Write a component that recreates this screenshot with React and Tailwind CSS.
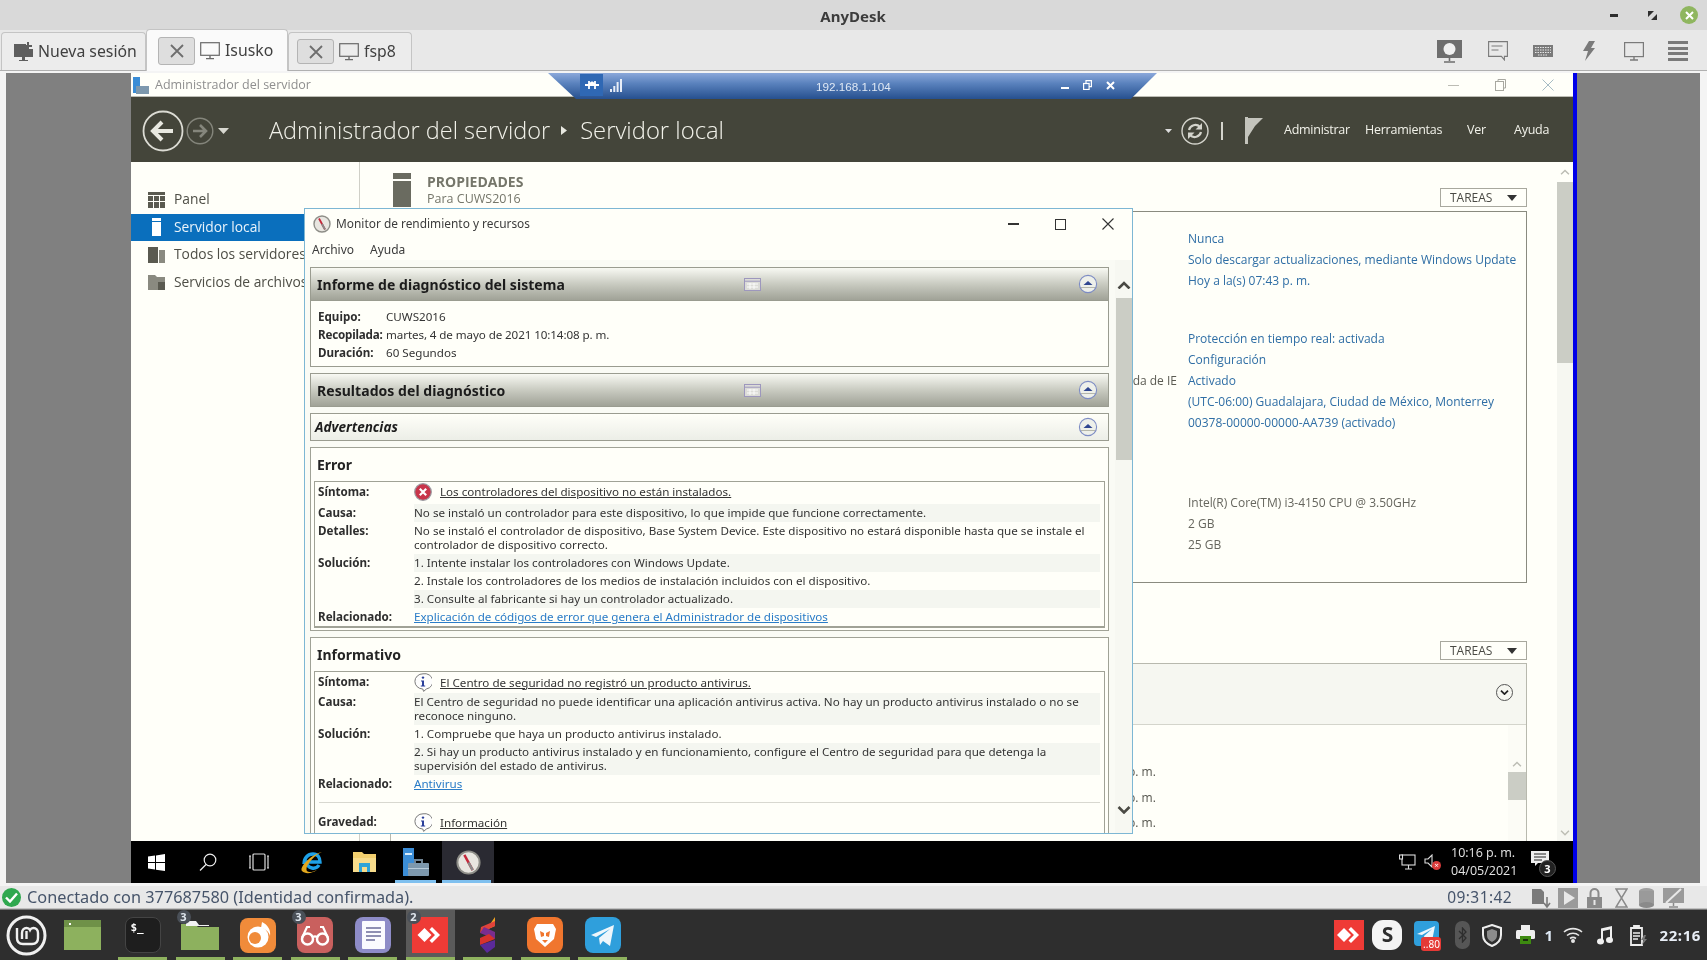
import React from "react";

const Monitor = ({ c = "#6a6a6a", w = 20, h = 18, fill = false }) => (
  <svg width={w} height={h} viewBox="0 0 20 18" fill="none">
    <rect x="0.7" y="0.7" width="18.6" height="12.6" fill={fill ? c : "none"} stroke={c} strokeWidth="1.2" />
    <path d="M10 13.5v2.5M6 16.6h8" stroke={c} strokeWidth="1.4" />
  </svg>
);
const TabX = ({ cls }) => (
  <div className={"flex items-center justify-center border border-[#b4b4b4] rounded-[3px] bg-[#dedede] " + cls}>
    <svg width="16" height="16" viewBox="0 0 16 16"><path d="M2 2l12 12M14 2L2 14" stroke="#6e6e6e" strokeWidth="1.8" /></svg>
  </div>
);
const Tareas = () => (
  <div className="w-[87px] h-[19px] border border-[#a8a89e] bg-[#fffff9] flex items-center justify-between pl-[9px] pr-[9px] text-[12px] text-[#4a4a44]">
    <span>TAREAS</span>
    <svg width="10" height="6" viewBox="0 0 10 6"><path d="M0 0h10L5 6z" fill="#333" /></svg>
  </div>
);
const Collapse = () => (
  <svg width="20" height="20" viewBox="0 0 20 20" className="shrink-0">
    <circle cx="10" cy="10" r="8.6" fill="#eef0ea" stroke="#7d8cc4" strokeWidth="1.1" />
    <path d="M10 7l4.5 4h-9z" fill="#2f4690" />
    <path d="M3 13.5h14" stroke="#b5b7ac" strokeWidth="1" />
  </svg>
);
const TableIco = () => (
  <svg width="17" height="13" viewBox="0 0 17 13">
    <rect x="0.5" y="0.5" width="16" height="12" fill="#dcdcd8" stroke="#9d97bd" />
    <path d="M1 3.2h15" stroke="#9d97bd" />
    <path d="M3 6h11M3 9h11M6 5v6M10 5v6" stroke="#fff" strokeWidth="0.9" />
  </svg>
);
const ErrIco = () => (
  <svg width="18" height="18" viewBox="0 0 18 18" className="shrink-0">
    <circle cx="9" cy="9" r="8.3" fill="#c8354a" stroke="#9a9aa0" strokeWidth="1.2" />
    <path d="M5.8 5.8l6.4 6.4M12.2 5.8l-6.4 6.4" stroke="#fff" strokeWidth="2.2" />
  </svg>
);
const InfoIco = () => (
  <svg width="18" height="19" viewBox="0 0 18 19" className="shrink-0">
    <path d="M9 .8a8 7.6 0 0 1 3.4 15.2L9.6 18.4 8.8 16A8 7.6 0 0 1 9 .8z" fill="#fdfdfd" stroke="#7a7a7a" strokeWidth="1" />
    <circle cx="9" cy="4.6" r="1.2" fill="#2a3f9a" />
    <path d="M7 7.4h3v5.2h1.2v1H6.8v-1H8V8.4H7z" fill="#2a3f9a" />
  </svg>
);
const Compass = ({ s = 18 }) => (
  <svg width={s} height={s} viewBox="0 0 18 18" className="shrink-0">
    <circle cx="9" cy="9" r="8" fill="#e8e6e0" stroke="#8e8e88" strokeWidth="1.4" />
    <path d="M6 3.5l6 11" stroke="#c4283a" strokeWidth="1.8" />
    <path d="M12 14.5L9 9" stroke="#8a8a8a" strokeWidth="1.8" />
  </svg>
);
const Row = ({ label, children, h = "py-[2px]", alt, lab = "text-[#2e2e2e]" }) => (
  <div className="flex">
    <div className={"w-[99px] shrink-0 pl-[3px] font-bold leading-[14px] " + h + " " + lab}>{label}</div>
    <div className={"flex-1 mr-[4px] leading-[14px] " + h + (alt ? " bg-[#f4f6f0]" : "")}>{children}</div>
  </div>
);
const Chev = ({ up = true, c = "#4a4a44", w = 14, sw = 2.6 }) => (
  <svg width={w} height={w * 0.6} viewBox="0 0 14 8.4"><path d={up ? "M1.5 7.5L7 2l5.5 5.5" : "M1.5 1L7 6.5 12.5 1"} fill="none" stroke={c} strokeWidth={sw} /></svg>
);

const Section = ({ title, mt = "" }) => (
  <div className={"h-[34px] border border-[#9a9c90] bg-gradient-to-b from-[#f8f9f3] via-[#c9cbc1] to-[#a0a297] flex items-center pl-[6px] " + mt}>
    <span className="font-bold text-[14px] text-[#1c1c1c] w-[420px] shrink-0 tracking-[0.05px]">{title}</span>
    <div className="ml-[7px]"><TableIco /></div>
    <div className="ml-auto mr-[10px]"><Collapse /></div>
  </div>
);

const Val = ({ children, cls = "text-[#2f6ea5]" }) => <div className={"h-[21px] leading-[21px] pl-[797px] whitespace-nowrap " + cls}>{children}</div>;

const SideText = ({ children }) => <span className="ml-[9px] w-[130px] overflow-hidden whitespace-nowrap block">{children}</span>;

function Dock() {
  const Item = ({ children, badge, active }) => (
    <div className={"relative w-[49px] h-full flex items-center justify-center " + (active ? "bg-[#5a5a5a]" : "")}>
      {children}
      {badge && <div className="absolute left-[1px] top-[0px] w-[14px] h-[14px] rounded-full bg-[#4a5058] text-[#dfe6ee] text-[11px] font-bold leading-[14px] text-center">{badge}</div>}
      <div className="absolute left-0 right-0 bottom-0 h-[3px] bg-[#8fb35f]" />
    </div>
  );
  return (
    <div className="h-[51px] bg-[#2e2e2e] flex items-center shrink-0 border-t border-[#777]">
      <div className="ml-[6px] w-[41px] flex justify-center">
        <svg width="41" height="41" viewBox="0 0 41 41" fill="none">
          <circle cx="20.5" cy="20.5" r="18.5" stroke="#f0f0f0" strokeWidth="3" />
          <path d="M11 13v10c0 4 2.500 6 6 6h9c4 0 6-2.500 6-6v-5c0-3-2-5-4.500-5-2 0-3 1-3.500 2-.5-1-1.700-2-3.500-2-2.500 0-4.500 2-4.500 5v6" stroke="#f0f0f0" strokeWidth="2.400" />
          <path d="M20.500 16v8" stroke="#f0f0f0" strokeWidth="2.400" />
        </svg>
      </div>
      <div className="ml-[17px] w-[37px] h-[30px] bg-[#8db15e] border-t-[7px] border-[#6f9148] relative">
        <div className="absolute left-[5px] top-[-4px] w-[2px] h-[2px] bg-white" />
      </div>
      <div className="ml-[17px] flex h-full gap-[8.5px]">
        <Item>
          <div className="w-[36px] h-[36px] rounded-[8px] bg-[#1e1e1e] border border-[#444] text-white text-[11px] font-bold pl-[5px] pt-[3px] leading-[14px] font-['DejaVu_Sans_Mono',monospace]">$_</div>
        </Item>
        <Item badge="3">
          <svg width="38" height="30" viewBox="0 0 38 30"><path d="M0 4h14l3 3h21v23H0z" fill="#8db15e" /><path d="M5 1h10l3 4h10v1H5z" fill="#f2f2f2" /></svg>
        </Item>
        <Item>
          <svg width="36" height="35" viewBox="0 0 36 35">
            <rect width="36" height="35" rx="8" fill="#f08b3a" />
            <circle cx="18" cy="19" r="10.500" fill="#fff" />
            <circle cx="15" cy="20" r="6" fill="#f08b3a" />
            <path d="M22 4c6 3 9 8 8 14-1-4-4-7-9-8z" fill="#fff" />
          </svg>
        </Item>
        <Item badge="3">
          <svg width="36" height="36" viewBox="0 0 36 36" fill="none">
            <rect width="36" height="36" rx="8" fill="#c9605e" />
            <circle cx="10.500" cy="22" r="5.500" stroke="#fff" strokeWidth="2.500" />
            <circle cx="25.500" cy="22" r="5.500" stroke="#fff" strokeWidth="2.500" />
            <path d="M16 20c1.500-1 2.500-1 4 0M5 21L10 10h3M31 21l-5-11h-3" stroke="#fff" strokeWidth="2.200" />
          </svg>
        </Item>
        <Item>
          <svg width="36" height="36" viewBox="0 0 36 36">
            <rect width="36" height="36" rx="8" fill="#8e8cc8" />
            <rect x="7" y="4" width="23" height="28" rx="1" fill="#fbfbff" />
            <path d="M11 11h15M11 15h15M11 19h15M11 23h9" stroke="#6c6c9a" strokeWidth="1.500" />
          </svg>
        </Item>
        <Item active badge="2">
          <svg width="36" height="36" viewBox="0 0 36 36">
            <rect width="36" height="36" fill="#ef3b36" />
            <path d="M12.500 11l7 7-7 7-7-7z" fill="#fff" />
            <path d="M20 10l8 8-8 8-2.500-2.500 5.500-5.500-5.500-5.500z" fill="#fff" />
          </svg>
        </Item>
        <Item>
          <svg width="18" height="38" viewBox="0 0 18 38">
            <path d="M16 1v9L7 14z" fill="#f5a623" />
            <path d="M16 10L1 17l1-6 14-6z" fill="#e0433a" />
            <path d="M1 17l15 6v-7L5 11z" fill="#7a2d8f" />
            <path d="M16 23L1 29v-7l9-4z" fill="#d8322c" />
            <path d="M1 29l7 8 8-6v-7z" fill="#5a2a9a" />
          </svg>
        </Item>
        <Item>
          <svg width="36" height="36" viewBox="0 0 36 36">
            <rect width="36" height="36" rx="8" fill="#f0762e" />
            <path d="M10 7h16l3 5-2 10-9 8-9-8-2-10z" fill="#fff" />
            <path d="M13 14l4 2v3l-3 1zM23 14l-4 2v3l3 1zM15 23h6l-3 3z" fill="#f0762e" />
          </svg>
        </Item>
        <Item>
          <svg width="36" height="36" viewBox="0 0 36 36">
            <rect width="36" height="36" rx="8" fill="#2f9fdc" />
            <path d="M6 18L29 8l-4 21-7-5-3 4-1-7 11-9-14 8z" fill="#eef6fb" />
          </svg>
        </Item>
      </div>
      <div className="ml-auto flex items-center h-full">
        <svg width="30" height="30" viewBox="0 0 30 30">
          <rect width="30" height="30" fill="#ef3b36" />
          <path d="M10 8l7 7-7 7-7-7z" fill="#fff" />
          <path d="M17 7l8 8-8 8-2.500-2.500 5.500-5.500-5.500-5.500z" fill="#fff" />
        </svg>
        <div className="ml-[8px] w-[30px] h-[30px] rounded-[11px] bg-[#f4f4f4] flex items-center justify-center text-[#2e2e2e] font-bold text-[21px] font-['Open_Sans',sans-serif]">S</div>
        <div className="relative ml-[12px] w-[27px] h-[28px]">
          <svg width="25" height="25" viewBox="0 0 25 25"><rect width="25" height="25" rx="4" fill="#2f9fdc" /><path d="M3 13L21 5l-3 15-5-3-2 3-1-5 8-7-10 6z" fill="#eef6fb" /></svg>
          <div className="absolute right-0 bottom-[-2px] w-[20px] h-[14px] rounded-[3px] bg-[#e53935] text-white text-[10px] leading-[14px] text-center">..80</div>
        </div>
        <div className="ml-[14px] w-[15px] h-[28px] rounded-[7px] bg-[#565656] flex items-center justify-center">
          <svg width="9" height="16" viewBox="0 0 9 16"><path d="M1 4l7 7-3.500 4V1L8 5 1 12" fill="none" stroke="#2e2e2e" strokeWidth="1.300" /></svg>
        </div>
        <svg className="ml-[12px]" width="20" height="23" viewBox="0 0 20 23" fill="none">
          <path d="M10 1l9 3v7c0 6-4 9-9 11C5 20 1 17 1 11V4z" stroke="#eee" strokeWidth="2" />
          <path d="M10 5l5 2v4c0 4-2 5-5 7-3-2-5-3-5-7V7z" fill="#8c8c8c" />
        </svg>
        <svg className="ml-[14px]" width="19" height="20" viewBox="0 0 19 20">
          <rect x="5" y="0" width="9" height="5" fill="#eee" />
          <rect x="0" y="5" width="19" height="9" rx="1.500" fill="#eee" />
          <rect x="4" y="11" width="11" height="8" fill="#3d8a10" />
          <path d="M7 15h5" stroke="#111" strokeWidth="1.500" />
        </svg>
        <span className="ml-[9px] w-[8px] text-[#dfeaf6] font-bold text-[15px] font-['Noto_Sans',sans-serif]">1</span>
        <svg className="ml-[11px]" width="20" height="16" viewBox="0 0 20 16" fill="none" stroke="#e6e6e6" strokeWidth="1.600">
          <path d="M1 5c5-4.500 13-4.500 18 0M4 8.500c3.500-3 8.500-3 12 0M7 11.500c2-1.500 4-1.500 6 0" />
          <circle cx="10" cy="14" r="1.200" fill="#e6e6e6" />
        </svg>
        <svg className="ml-[14px]" width="16" height="19" viewBox="0 0 16 19" fill="#f0f0f0">
          <path d="M4 2.500L15 0v3L6 5v10H4zM13 3h2v11h-2z" />
          <ellipse cx="3.500" cy="15.500" rx="3.500" ry="3" />
          <ellipse cx="12.500" cy="14" rx="3.500" ry="3" />
        </svg>
        <svg className="ml-[17px]" width="18" height="21" viewBox="0 0 18 21" fill="none">
          <path d="M1 3h11v17H1zM4 3V1h5v2" stroke="#eee" strokeWidth="1.800" />
          <path d="M3 8h7M3 11h7M3 14h5" stroke="#eee" strokeWidth="1.500" />
          <path d="M14 10l-3 5h2.500L12 20l5-6h-2.500L16 10z" fill="#777" />
        </svg>
        <span className="ml-[11px] mr-[6px] text-[#e8eef6] font-bold text-[15px] tracking-[0.6px] font-['Noto_Sans',sans-serif]">22:16</span>
      </div>
    </div>
  );
}

function Taskbar() {
  const B = ({ w = "w-[52px]", children, cls = "" }) => <div className={"relative h-full flex items-center justify-center " + w + " " + cls}>{children}</div>;
  return (
    <div className="h-[42px] bg-black flex items-center shrink-0 text-white relative">
      <B w="w-[51px]">
        <svg width="17" height="17" viewBox="0 0 17 17" fill="#fff"><path d="M0 2.500l7-1v6.500H0zM8 1.400L17 0v8H8zM0 9h7v6.500l-7-1zM8 9h9v8l-9-1.300z" /></svg>
      </B>
      <B w="w-[51px]">
        <svg width="18" height="18" viewBox="0 0 18 18" fill="none" stroke="#eee" strokeWidth="1.200"><circle cx="11" cy="7" r="5.800" /><path d="M7 11.500L1 17.500" /></svg>
      </B>
      <B w="w-[51px]">
        <svg width="22" height="18" viewBox="0 0 22 18" fill="none" stroke="#ddd" strokeWidth="1.200"><rect x="5" y="1" width="12" height="16" rx="1" /><path d="M2 3v12M1 3h2M1 15h2M20 3v12M19 3h2M19 15h2" /></svg>
      </B>
      <B cls="ml-[2px]">
        <svg width="25" height="25" viewBox="0 0 25 25" fill="none">
          <path d="M4 14c0-6 4-10 9-10 5 0 7 4 7 8H7c0 7 9 8 12 3" stroke="#1ea1e8" strokeWidth="3.400" />
          <path d="M2 21c-3-3 8-16 20-19-8 3-18 15-15 19 2 2 6 1 10-1-6 4-12 4-15 1z" fill="#e3a81e" />
        </svg>
      </B>
      <B>
        <svg width="23" height="22" viewBox="0 0 23 22">
          <path d="M0 1h9l2 2h12v18H0z" fill="#f2cf6e" />
          <path d="M0 7h23v14H0z" fill="#f7dc8c" />
          <path d="M6 12h11v9H6z" fill="#2ea4d8" />
          <path d="M9 16h5v5H9z" fill="#f7dc8c" />
        </svg>
      </B>
      <B>
        <svg width="26" height="28" viewBox="0 0 26 28">
          <rect x="0" y="0" width="11" height="28" fill="#3b8dd6" />
          <rect x="2" y="5" width="7" height="2" fill="#d8ecfa" />
          <rect x="5" y="15" width="21" height="13" rx="1" fill="#7d98ad" />
          <path d="M12 15v-3h7v3" fill="none" stroke="#6f8494" strokeWidth="2" />
          <rect x="5" y="20" width="21" height="1" fill="#b8ccdb" />
        </svg>
        <div className="absolute left-[5px] right-[6px] bottom-0 h-[3px] bg-[#7fc0ef]" />
      </B>
      <B cls="bg-[#2a2a32]">
        <Compass s={25} />
        <div className="absolute left-0 right-[3px] bottom-0 h-[3px] bg-[#7fc0ef]" />
      </B>
      <div className="ml-auto flex items-center h-full pr-[3px]">
        <svg width="17" height="16" viewBox="0 0 17 16" fill="none" stroke="#ddd" strokeWidth="1.100"><rect x="3" y="1" width="13" height="10" /><path d="M9.500 11v4M6 15h7" /><rect x="0.500" y="1" width="3" height="4" fill="#000" /></svg>
        <div className="relative ml-[8px] w-[17px] h-[16px]">
          <svg width="10" height="14" viewBox="0 0 10 14" fill="none" stroke="#ddd" strokeWidth="1.100"><path d="M1 5h3l4-4v12L4 9H1z" /></svg>
          <div className="absolute right-0 bottom-0 w-[9px] h-[9px] rounded-full bg-[#d93a3a] text-white text-[8px] leading-[8px] text-center">×</div>
        </div>
        <div className="ml-[10px] w-[62px] text-center text-[12.500px] leading-[18px] text-[#e4e4e4] font-['Open_Sans',sans-serif] whitespace-nowrap">
          <div>10:16 p. m.</div>
          <div>04/05/2021</div>
        </div>
        <div className="relative ml-[18px] w-[22px] h-[22px]">
          <svg width="18" height="16" viewBox="0 0 18 16"><path d="M0 0h18v12H7l-3 3v-3H0z" fill="#eee" /><path d="M3 3h12M3 6h12M3 9h8" stroke="#222" strokeWidth="1" /></svg>
          <div className="absolute right-[-3px] bottom-[-4px] w-[17px] h-[17px] rounded-full bg-[#222] border border-[#555] text-[11px] leading-[15px] text-center font-bold">3</div>
        </div>
        <div className="w-[17px]" />
      </div>
    </div>
  );
}

function PerfDialog() {
  return (
    <div className="absolute left-[173px] top-[46px] w-[829px] h-[626px] border border-[#7db7d4] bg-[#fffff9] flex flex-col text-[11.630px] text-[#343434] font-['Noto_Sans',sans-serif] overflow-hidden">
      <div className="h-[30px] shrink-0 flex items-center pl-[8px] text-[11.900px] text-[#3c3c3c]">
        <Compass />
        <span className="ml-[5px]">Monitor de rendimiento y recursos</span>
        <div className="ml-auto flex items-center mr-[18px] gap-[36px]">
          <div className="w-[11px] h-[1.500px] bg-[#333]" />
          <div className="w-[11px] h-[11px] border border-[#333]" />
          <svg width="12" height="12" viewBox="0 0 12 12"><path d="M.5.5l11 11M11.500.5l-11 11" stroke="#333" strokeWidth="1.100" /></svg>
        </div>
      </div>
      <div className="h-[21px] shrink-0 flex items-center pl-[7px] gap-[16px] text-[12px] text-[#3c3c3c]">
        <span>Archivo</span>
        <span>Ayuda</span>
      </div>
      <div className="flex flex-1 min-h-0 bg-[#fafbf5]">
        <div className="ml-[5px] w-[799px] pt-[7px] shrink-0">
          <Section title="Informe de diagnóstico del sistema" />
          <div className="h-[66px] border border-t-0 border-[#9a9c90] bg-[#fffff9] pl-[7px] pt-[7px] leading-[18px]">
            <div className="flex"><b className="w-[68px] text-[#2e2e2e]">Equipo:</b><span>CUWS2016</span></div>
            <div className="flex"><b className="w-[68px] text-[#2e2e2e] tracking-[-0.2px]">Recopilada:</b><span className="tracking-[-0.1px]">martes, 4 de mayo de 2021 10:14:08 p. m.</span></div>
            <div className="flex"><b className="w-[68px] text-[#2e2e2e]">Duración:</b><span>60 Segundos</span></div>
          </div>
          <Section title="Resultados del diagnóstico" mt="mt-[6px]" />
          <div className="mt-[6px] h-[28px] border border-[#9a9c90] bg-gradient-to-b from-[#fffff9] to-[#eceee7] flex items-center pl-[4px]">
            <span className="font-bold italic text-[13.500px] text-[#1c1c1c]">Advertencias</span>
            <div className="ml-auto mr-[10px]"><Collapse /></div>
          </div>
          <div className="mt-[6px] h-[184px] border border-[#a0a296] bg-[#fffff9]">
            <div className="h-[33px] flex items-center pl-[6px] font-bold text-[14px] text-[#242424]">Error</div>
            <div className="mx-[3px] border border-[#a0a296] border-b-2">
              <Row label="Síntoma:" h="h-[22px] pt-[3px]">
                <div className="flex items-center -mt-[2px]"><ErrIco /><a className="ml-[8px] underline">Los controladores del dispositivo no están instalados.</a></div>
              </Row>
              <Row label="Causa:" alt>No se instaló un controlador para este dispositivo, lo que impide que funcione correctamente.</Row>
              <Row label="Detalles:">No se instaló el controlador de dispositivo, Base System Device. Este dispositivo no estará disponible hasta que se instale el controlador de dispositivo correcto.</Row>
              <Row label="Solución:" alt>1. Intente instalar los controladores con Windows Update.</Row>
              <Row label="">2. Instale los controladores de los medios de instalación incluidos con el dispositivo.</Row>
              <Row label="" alt>3. Consulte al fabricante si hay un controlador actualizado.</Row>
              <Row label="Relacionado:"><a className="underline text-[#2a7cc7]">Explicación de códigos de error que genera el Administrador de dispositivos</a></Row>
            </div>
          </div>
          <div className="mt-[6px] border border-[#a0a296] bg-[#fffff9]">
            <div className="h-[33px] flex items-center pl-[6px] font-bold text-[14px] text-[#242424]">Informativo</div>
            <div className="mx-[3px] border border-[#a0a296]">
              <Row label="Síntoma:" h="h-[21px] pt-[3px]">
                <div className="flex items-center -mt-[2px]"><InfoIco /><a className="ml-[8px] underline">El Centro de seguridad no registró un producto antivirus.</a></div>
              </Row>
              <Row label="Causa:" alt>El Centro de seguridad no puede identificar una aplicación antivirus activa. No hay un producto antivirus instalado o no se reconoce ninguno.</Row>
              <Row label="Solución:">1. Compruebe que haya un producto antivirus instalado.</Row>
              <Row label="" alt>2. Si hay un producto antivirus instalado y en funcionamiento, configure el Centro de seguridad para que detenga la supervisión del estado de antivirus.</Row>
              <Row label="Relacionado:"><a className="underline text-[#2a7cc7]">Antivirus</a></Row>
              <div className="mt-[9px] mb-[9px] mx-[4px] h-px bg-[#d8d8d0]" />
              <Row label="Gravedad:" h="h-[21px] pt-[3px]">
                <div className="flex items-center -mt-[2px]"><InfoIco /><a className="ml-[8px] underline">Información</a></div>
              </Row>
            </div>
          </div>
        </div>
        <div className="ml-[6px] w-[17px] flex flex-col items-center bg-[#f7f8f2]">
          <div className="h-[38px] shrink-0 flex items-center justify-center pt-[12px]"><Chev /></div>
          <div className="w-[16px] h-[162px] bg-[#cbcdc5] shrink-0" />
          <div className="flex-1 flex items-end pb-[19px]"><Chev up={false} /></div>
        </div>
      </div>
    </div>
  );
}

function Remote() {
  return (
    <div className="relative w-[1442px] shrink-0 flex flex-col bg-[#fffff9] font-['Open_Sans',sans-serif]">
      <div className="h-[24px] shrink-0 flex items-center border-b border-[#bdbdb5] relative text-[12.5px] text-[#8f8f8f] pt-[1px]">
        <svg className="ml-[2px]" width="16" height="17" viewBox="0 0 16 17"><rect x="0" y="0" width="7" height="16" fill="#3b8dd6" /><rect x="3" y="9" width="13" height="8" fill="#7d98ad" /></svg>
        <span className="ml-[6px]">Administrador del servidor</span>
        <div className="ml-auto flex items-center gap-[36px] mr-[19px]">
          <div className="w-[11px] h-px bg-[#bcbcb4]" />
          <svg width="11" height="12" viewBox="0 0 11 12" fill="none" stroke="#a8a8a0"><rect x=".5" y="2.500" width="8" height="9" /><path d="M3 2.500V.5h7.500v8.500H8.500" /></svg>
          <svg width="12" height="12" viewBox="0 0 12 12"><path d="M.5.5l11 11M11.500.5l-11 11" stroke="#a6bcc4" strokeWidth="1" /></svg>
        </div>
      </div>
      <div className="h-[65px] shrink-0 bg-[#44453a] flex items-center text-[#f2f2ea] pt-[2px]">
        <svg className="ml-[11px]" width="42" height="42" viewBox="0 0 42 42" fill="none">
          <circle cx="21" cy="21" r="19.500" stroke="#dcdcd4" strokeWidth="1.800" />
          <path d="M31 21H12M20 12l-9 9 9 9" stroke="#e8e8e0" strokeWidth="4" />
        </svg>
        <svg className="ml-[2px]" width="28" height="28" viewBox="0 0 28 28" fill="none">
          <circle cx="14" cy="14" r="12.800" stroke="#85867c" strokeWidth="1.400" />
          <path d="M7 14h13M14 8l6 6-6 6" stroke="#85867c" strokeWidth="2.600" />
        </svg>
        <svg className="ml-[4px]" width="11" height="6" viewBox="0 0 11 6"><path d="M0 0h11L5.500 6z" fill="#d8d8d0" /></svg>
        <span className="ml-[40px] text-[23.5px] font-light whitespace-nowrap">Administrador del servidor</span>
        <svg className="ml-[11px]" width="6" height="9" viewBox="0 0 6 9"><path d="M0 0l6 4.500L0 9z" fill="#e8e8e0" /></svg>
        <span className="ml-[13px] text-[23.800px] font-light whitespace-nowrap">Servidor local</span>
        <div className="ml-auto flex items-center">
          <svg width="7" height="4" viewBox="0 0 7 4"><path d="M0 0h7L3.500 4z" fill="#ddd" /></svg>
          <svg className="ml-[9px]" width="28" height="28" viewBox="0 0 28 28" fill="none" stroke="#d4d4cc">
            <circle cx="14" cy="14" r="13" strokeWidth="1.400" />
            <path d="M8 13a6.500 6.500 0 0 1 11-3M20 15a6.500 6.500 0 0 1-11 3" strokeWidth="2.200" />
            <path d="M21 6v6.500h-6.500zM7 22v-6.500h6.500z" fill="#d4d4cc" stroke="none" />
          </svg>
          <div className="ml-[12px] w-[2px] h-[18px] bg-[#d4d4cc]" />
          <svg className="ml-[22px]" width="18" height="27" viewBox="0 0 18 27"><path d="M0 0h3v27H0z" fill="#c4c4bc" /><path d="M3 1h15l-8 8-7 11z" fill="#c4c4bc" /></svg>
          <div className="ml-[21px] flex text-[12.500px] leading-none whitespace-nowrap tracking-[-0.25px]">
            <span className="w-[81px]">Administrar</span>
            <span className="w-[102px]">Herramientas</span>
            <span className="w-[47px]">Ver</span>
            <span className="w-[59px]">Ayuda</span>
          </div>
        </div>
      </div>
      <div className="h-[679px] shrink-0 flex relative overflow-hidden">
        <div className="w-[229px] shrink-0 border-r border-[#d0d0c8] pt-[24px] text-[13.800px] text-[#4e4e46]">
          <div className="h-[27.5px] flex items-center pl-[17px]">
            <svg className="shrink-0" width="17" height="16" viewBox="0 0 17 16" fill="#5a5a50"><rect width="17" height="3" /><rect y="4" width="5" height="5" /><rect x="6" y="4" width="5" height="5" /><rect x="12" y="4" width="5" height="5" /><rect y="10" width="5" height="6" /><rect x="6" y="10" width="5" height="6" /><rect x="12" y="10" width="5" height="6" /></svg>
            <SideText>Panel</SideText>
          </div>
          <div className="h-[27.5px] flex items-center pl-[17px] bg-[#0a6fbd] text-[#eaf4fb]">
            <svg className="ml-[4px] mr-[4px] shrink-0" width="9" height="18" viewBox="0 0 9 18" fill="#fff"><rect width="9" height="3" y="0" /><rect y="4" width="9" height="14" /></svg>
            <SideText>Servidor local</SideText>
          </div>
          <div className="h-[27.5px] flex items-center pl-[17px]">
            <svg className="shrink-0" width="17" height="16" viewBox="0 0 17 16" fill="#5a5a50"><rect width="10" height="16" /><rect x="11" y="3" width="6" height="13" fill="#8a8a80" /></svg>
            <SideText>Todos los servidores</SideText>
          </div>
          <div className="h-[27.5px] flex items-center pl-[17px]">
            <svg className="shrink-0" width="17" height="16" viewBox="0 0 17 16"><path d="M0 1h7l2 2h8v6H0z" fill="#8a8a80" /><rect x="0" y="5" width="10" height="11" fill="#8a8a80" /><rect x="10" y="8" width="7" height="8" fill="#5a5a50" /></svg>
            <SideText>Servicios de archivos</SideText>
          </div>
        </div>
        <div className="flex-1 min-w-0 flex">
          <div className="w-[1197px] px-[30px] pt-[11px] shrink-0 text-[12px]">
            <div className="flex items-end h-[34px]">
              <svg className="ml-[3px]" width="18" height="34" viewBox="0 0 18 34"><rect width="18" height="6" fill="#6a6b60" /><rect y="8" width="18" height="26" fill="#6a6b60" /></svg>
              <div className="ml-[16px] flex flex-col h-full justify-between">
                <span className="font-bold text-[14px] leading-[17px] text-[#75766a]">PROPIEDADES</span>
                <span className="text-[12.5px] leading-[16px] text-[#75766a]">Para CUWS2016</span>
              </div>
              <div className="ml-auto"><Tareas /></div>
            </div>
            <div className="mt-[4px] h-[372px] border border-[#8a8b80] pt-[16px] whitespace-nowrap">
              <Val>Nunca</Val>
              <Val>Solo descargar actualizaciones, mediante Windows Update</Val>
              <Val>Hoy a la(s) 07:43 p. m.</Val>
              <div className="h-[37px]" />
              <Val>Protección en tiempo real: activada</Val>
              <Val>Configuración</Val>
              <div className="flex h-[21px] leading-[21px]">
                <div className="w-[786px] text-right text-[#5a5a52]">Configuración de seguridad mejorada de IE</div>
                <div className="ml-[11px] text-[#2f6ea5]">Activado</div>
              </div>
              <Val>(UTC-06:00) Guadalajara, Ciudad de México, Monterrey</Val>
              <Val>00378-00000-00000-AA739 (activado)</Val>
              <div className="h-[59px]" />
              <Val cls="text-[#66665e]">Intel(R) Core(TM) i3-4150 CPU @ 3.50GHz</Val>
              <Val cls="text-[#66665e]">2 GB</Val>
              <Val cls="text-[#66665e]">25 GB</Val>
            </div>
            <div className="mt-[58px] flex justify-end"><Tareas /></div>
            <div className="mt-[3px] h-[178px] border border-[#b8b9ae] border-b-0">
              <div className="h-[61px] bg-[#f6f7f1] border-b border-[#d4d5cc] flex items-center justify-end pr-[13px] pb-[3px]">
                <div className="w-[17px] h-[17px] rounded-full border border-[#555] flex items-center justify-center"><Chev up={false} c="#222" w={9} sw={2.600} /></div>
              </div>
              <div className="flex h-[116px]">
                <div className="flex-1 pt-[34px] pl-[737px] text-[#55554e] leading-[25.500px]">
                  <div>p. m.</div><div>p. m.</div><div>p. m.</div>
                </div>
                <div className="w-[18px] flex flex-col items-center pt-[36px] bg-[#fcfcf6]">
                  <Chev c="#bcbdb4" w={10} sw={2} />
                  <div className="mt-[5px] w-[18px] h-[28px] bg-[#cbcdc5]" />
                </div>
              </div>
            </div>
          </div>
          <div className="w-[16px] shrink-0 bg-[#f6f7f1] flex flex-col items-center">
            <div className="h-[20px] bg-[#fffff9] w-full flex items-center justify-center"><Chev c="#bcbdb4" w={10} sw={2} /></div>
            <div className="w-full h-[181px] bg-[#cbcdc5]" />
            <div className="flex-1 flex items-end justify-center pb-[5px]"><Chev up={false} c="#bcbdb4" w={10} sw={2} /></div>
          </div>
        </div>
        <PerfDialog />
      </div>
      <Taskbar />

      <div className="absolute left-[417px] top-0 w-[609px] h-[26px] [clip-path:polygon(0_0,100%_0,95.700%_100%,4.600%_100%)] bg-gradient-to-b from-[#8ba8da] via-[#5a82bd] via-40% to-[#26508f] text-[#dfe8f4] text-[11.700px] font-['Liberation_Sans',sans-serif]">
        <div className="h-[24px] flex items-center relative">
          <div className="ml-[32px] w-[23px] h-[22px] bg-[#2f68b4] flex items-center justify-center">
            <svg width="14" height="10" viewBox="0 0 14 10"><path d="M0 5h14M4 1v8M10 1v8M4 5l3-3M10 5L7 2" stroke="#fff" strokeWidth="1.800" /></svg>
          </div>
          <svg className="ml-[7px]" width="12" height="13" viewBox="0 0 12 13" fill="#e8eef8"><rect y="10" width="2" height="3" /><rect x="3.300" y="7" width="2" height="6" /><rect x="6.600" y="3" width="2" height="10" /><rect x="10" y="0" width="2" height="13" /></svg>
          <span className="absolute left-[268px] top-[5px] whitespace-nowrap">192.168.1.104</span>
          <div className="ml-auto mr-[42px] flex items-center gap-[14px]">
            <div className="w-[8px] h-[2px] bg-white mt-[6px]" />
            <svg width="9" height="10" viewBox="0 0 9 10" fill="none" stroke="#fff" strokeWidth="1.200"><rect x=".6" y="3.500" width="5.500" height="6" /><path d="M3 3V.6h5.400v6H6" /></svg>
            <svg width="9" height="9" viewBox="0 0 9 9"><path d="M1 1l7 7M8 1L1 8" stroke="#fff" strokeWidth="2" /></svg>
          </div>
        </div>
      </div>
    </div>
  );
}

export default function App() {
  return (
    <div className="w-[1707px] h-[960px] overflow-hidden flex flex-col bg-[#f4f4f4] font-['Noto_Sans',sans-serif] blur-[0.5px]">
      <div className="h-[30px] shrink-0 bg-[#d9d9d9] flex items-center relative pt-[2px]">
        <span className="mx-auto text-[15px] font-bold text-[#3c3c3c] pr-[1px]">AnyDesk</span>
        <div className="absolute right-[9px] top-[6px] flex items-center">
          <div className="w-[8px] h-[3px] bg-[#2e2e2e]" />
          <svg className="ml-[30px]" width="9" height="9" viewBox="0 0 9 9"><path d="M0 0h6L0 6zM9 9H3l6-6z" fill="#2e2e2e" /></svg>
          <div className="ml-[23px] w-[18px] h-[18px] rounded-full bg-[#8fb65f] flex items-center justify-center">
            <svg width="9" height="9" viewBox="0 0 9 9"><path d="M1 1l7 7M8 1L1 8" stroke="#fff" strokeWidth="2" /></svg>
          </div>
        </div>
      </div>
      <div className="h-[41px] shrink-0 bg-[#e8e8e8] flex items-end border-b border-[#b0b0b0] pl-[1px] relative text-[15.800px] text-[#404040]">
        <div className="w-[145px] h-[38px] bg-[#ececec] border border-b-0 border-[#c4c4c4] rounded-t-[4px] flex items-center pl-[12px]">
          <svg width="20" height="20" viewBox="0 0 20 20"><path d="M0 2h12v3h3v2h4v8H0z" fill="#5e5e5e" /><path d="M8 15h3v3h3v1H5v-1h3z" fill="#5e5e5e" /><path d="M13 0h2v3h3v2h-3v3h-2V5h-3V3h3z" fill="#5e5e5e" /></svg>
          <span className="ml-[4px] whitespace-nowrap">Nueva sesión</span>
        </div>
        <div className="w-[142px] h-[42px] bg-[#fafafa] border border-b-0 border-[#c4c4c4] rounded-t-[4px] flex items-center pl-[11px] relative -mb-[1px]">
          <TabX cls="w-[37px] h-[28px]" />
          <div className="ml-[5px]"><Monitor /></div>
          <span className="ml-[5px]">Isusko</span>
        </div>
        <div className="w-[124px] h-[38px] bg-[#ececec] border border-b-0 border-[#c4c4c4] rounded-t-[4px] flex items-center pl-[8px]">
          <TabX cls="w-[37px] h-[25px]" />
          <div className="ml-[5px]"><Monitor /></div>
          <span className="ml-[5px]">fsp8</span>
        </div>
        <div className="ml-auto self-center flex items-center pr-[19px] pt-[2px]">
          <svg width="25" height="23" viewBox="0 0 25 23"><rect width="25" height="18" fill="#6e6e6e" /><circle cx="12.500" cy="9" r="6" fill="#f0f0f0" /><path d="M12.500 18v3M7 22h11" stroke="#6e6e6e" strokeWidth="1.600" /></svg>
          <svg className="ml-[26px]" width="20" height="20" viewBox="0 0 20 20" fill="none" stroke="#7a7a7a" strokeWidth="1.100"><path d="M.6.6h18.800v14.800h-3v3.500l-3-3.500H.6z" /><path d="M3.500 5h11M3.500 9h7" /></svg>
          <svg className="ml-[25px]" width="20" height="12" viewBox="0 0 20 12"><rect width="20" height="12" fill="#7a7a7a" /><path d="M2 2.500h16M2 5h16M2 7.500h16M5 10h10" stroke="#e8e8e8" strokeWidth="1" strokeDasharray="1.500 1" /></svg>
          <svg className="ml-[30px]" width="12" height="20" viewBox="0 0 12 20"><path d="M6 0h6L8 7h4L2 20l3-10H0z" fill="#7a7a7a" /></svg>
          <svg className="ml-[29px]" width="20" height="19" viewBox="0 0 20 19" fill="none" stroke="#7a7a7a"><rect x=".6" y=".6" width="18.800" height="14" strokeWidth="1.200" /><path d="M10 15v2.500M6 18h8" strokeWidth="1.400" /></svg>
          <div className="ml-[24px] w-[20px] flex flex-col gap-[2.500px]">
            <div className="h-[3px] bg-[#7a7a7a]" /><div className="h-[3px] bg-[#7a7a7a]" /><div className="h-[3px] bg-[#7a7a7a]" /><div className="h-[3px] bg-[#7a7a7a]" />
          </div>
        </div>
      </div>
      <div className="h-[815px] shrink-0 pt-[2px] pb-[3px] flex">
        <div className="ml-[6px] w-[125px] bg-[#808080]" />
        <Remote />
        <div className="w-[4px] bg-[#0000e8]" />
        <div className="w-[123px] bg-[#808080]" />
      </div>
      <div className="h-[23px] shrink-0 bg-[#e8e8e8] flex items-center border-b border-[#c0c0c0] text-[16.300px] text-[#46546a] pt-[1px]">
        <div className="ml-[2px] w-[19px] h-[19px] rounded-full bg-[#2fa84f] flex items-center justify-center">
          <svg width="13" height="11" viewBox="0 0 13 11"><path d="M1 5.500L5 9.500 12 1.500" fill="none" stroke="#fff" strokeWidth="2.400" /></svg>
        </div>
        <span className="ml-[6px]">Conectado con 377687580 (Identidad confirmada).</span>
        <div className="ml-auto flex items-center text-[#7a7a7a] pr-[23px]">
          <span className="text-[15.500px] text-[#46546a] tracking-[0.4px] mr-[20px]">09:31:42</span>
          <svg width="20" height="20" viewBox="0 0 20 20"><path d="M0 1h9l3 3v12H0z" fill="#7a7a7a" /><path d="M15 9v9M12 15l3 4 3-4" stroke="#7a7a7a" strokeWidth="1.600" fill="none" /></svg>
          <svg className="ml-[6px]" width="20" height="20" viewBox="0 0 20 20"><rect width="20" height="20" fill="#9a9a9a" /><path d="M6 3l11 7-11 7z" fill="#e8e8e8" /></svg>
          <svg className="ml-[9px]" width="15" height="20" viewBox="0 0 15 20"><path d="M3.500 9V5a4 4 0 0 1 8 0v4" fill="none" stroke="#8a8a8a" strokeWidth="2" /><rect y="9" width="15" height="11" fill="#8a8a8a" /><rect x="6.500" y="12" width="2" height="5" fill="#e8e8e8" /></svg>
          <svg className="ml-[13px]" width="13" height="20" viewBox="0 0 13 20" fill="none" stroke="#8a8a8a" strokeWidth="1.500"><path d="M1 1h11L1 19h11z" /></svg>
          <svg className="ml-[11px]" width="15" height="20" viewBox="0 0 15 20"><ellipse cx="7.500" cy="3" rx="7.500" ry="3" fill="#a0a0a0" /><rect y="3" width="15" height="14" fill="#9a9a9a" /><ellipse cx="7.500" cy="17" rx="7.500" ry="3" fill="#8a8a8a" /></svg>
          <svg className="ml-[9px]" width="21" height="20" viewBox="0 0 21 20"><rect width="21" height="15" fill="#9a9a9a" /><path d="M3 15L18 1" stroke="#e8e8e8" strokeWidth="2" /><path d="M10.500 15v3M6 19h9" stroke="#8a8a8a" strokeWidth="1.500" /></svg>
        </div>
      </div>
      <Dock />
    </div>
  );
}
